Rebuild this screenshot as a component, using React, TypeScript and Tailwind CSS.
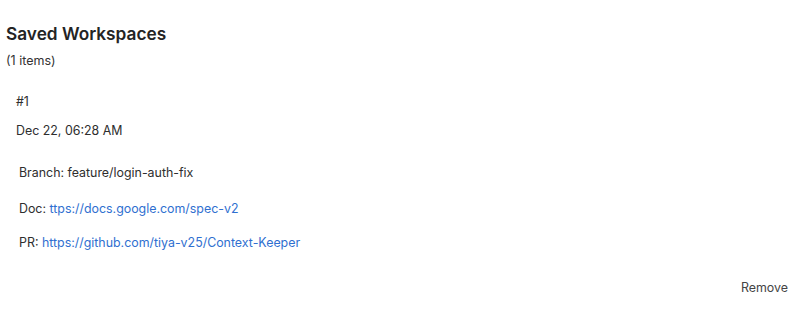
import React from 'react';

export default function App() {
  return (
    <div className="w-[806px] h-[327px] bg-white text-[#2e2e2e] px-[6px] pt-[23px]" style={{ fontFamily: 'Inter, "Noto Sans", sans-serif' }}>
      <h2 className="text-[17.25px] font-semibold leading-[22px] text-[#242424]">Saved Workspaces</h2>
      <p className="text-[12.5px] leading-[16px] mt-[8px] text-[#333]">(1 items)</p>

      <div className="mt-[25px] pl-[10px] pr-[12px]">
        <div className="text-[12.4px] leading-[16px]">#1</div>
        <div className="text-[12.4px] leading-[16px] mt-[13px]">Dec 22, 06:28 AM</div>

        <div className="pl-[3px] mt-[26px] flex flex-col text-[12.4px] leading-[16px]">
          <div>Branch: feature/login-auth-fix</div>
          <div className="mt-[20px]">
            Doc: <a className="text-[#2f6fd0]">ttps://docs.google.com/spec-v2</a>
          </div>
          <div className="mt-[18px]">
            PR: <a className="text-[#2f6fd0]">https://github.com/tiya-v25/Context-Keeper</a>
          </div>
        </div>

        <div className="flex justify-end mt-[29px]">
          <button className="text-[12.4px] leading-[16px] text-[#444]">Remove</button>
        </div>
      </div>
    </div>
  );
}
